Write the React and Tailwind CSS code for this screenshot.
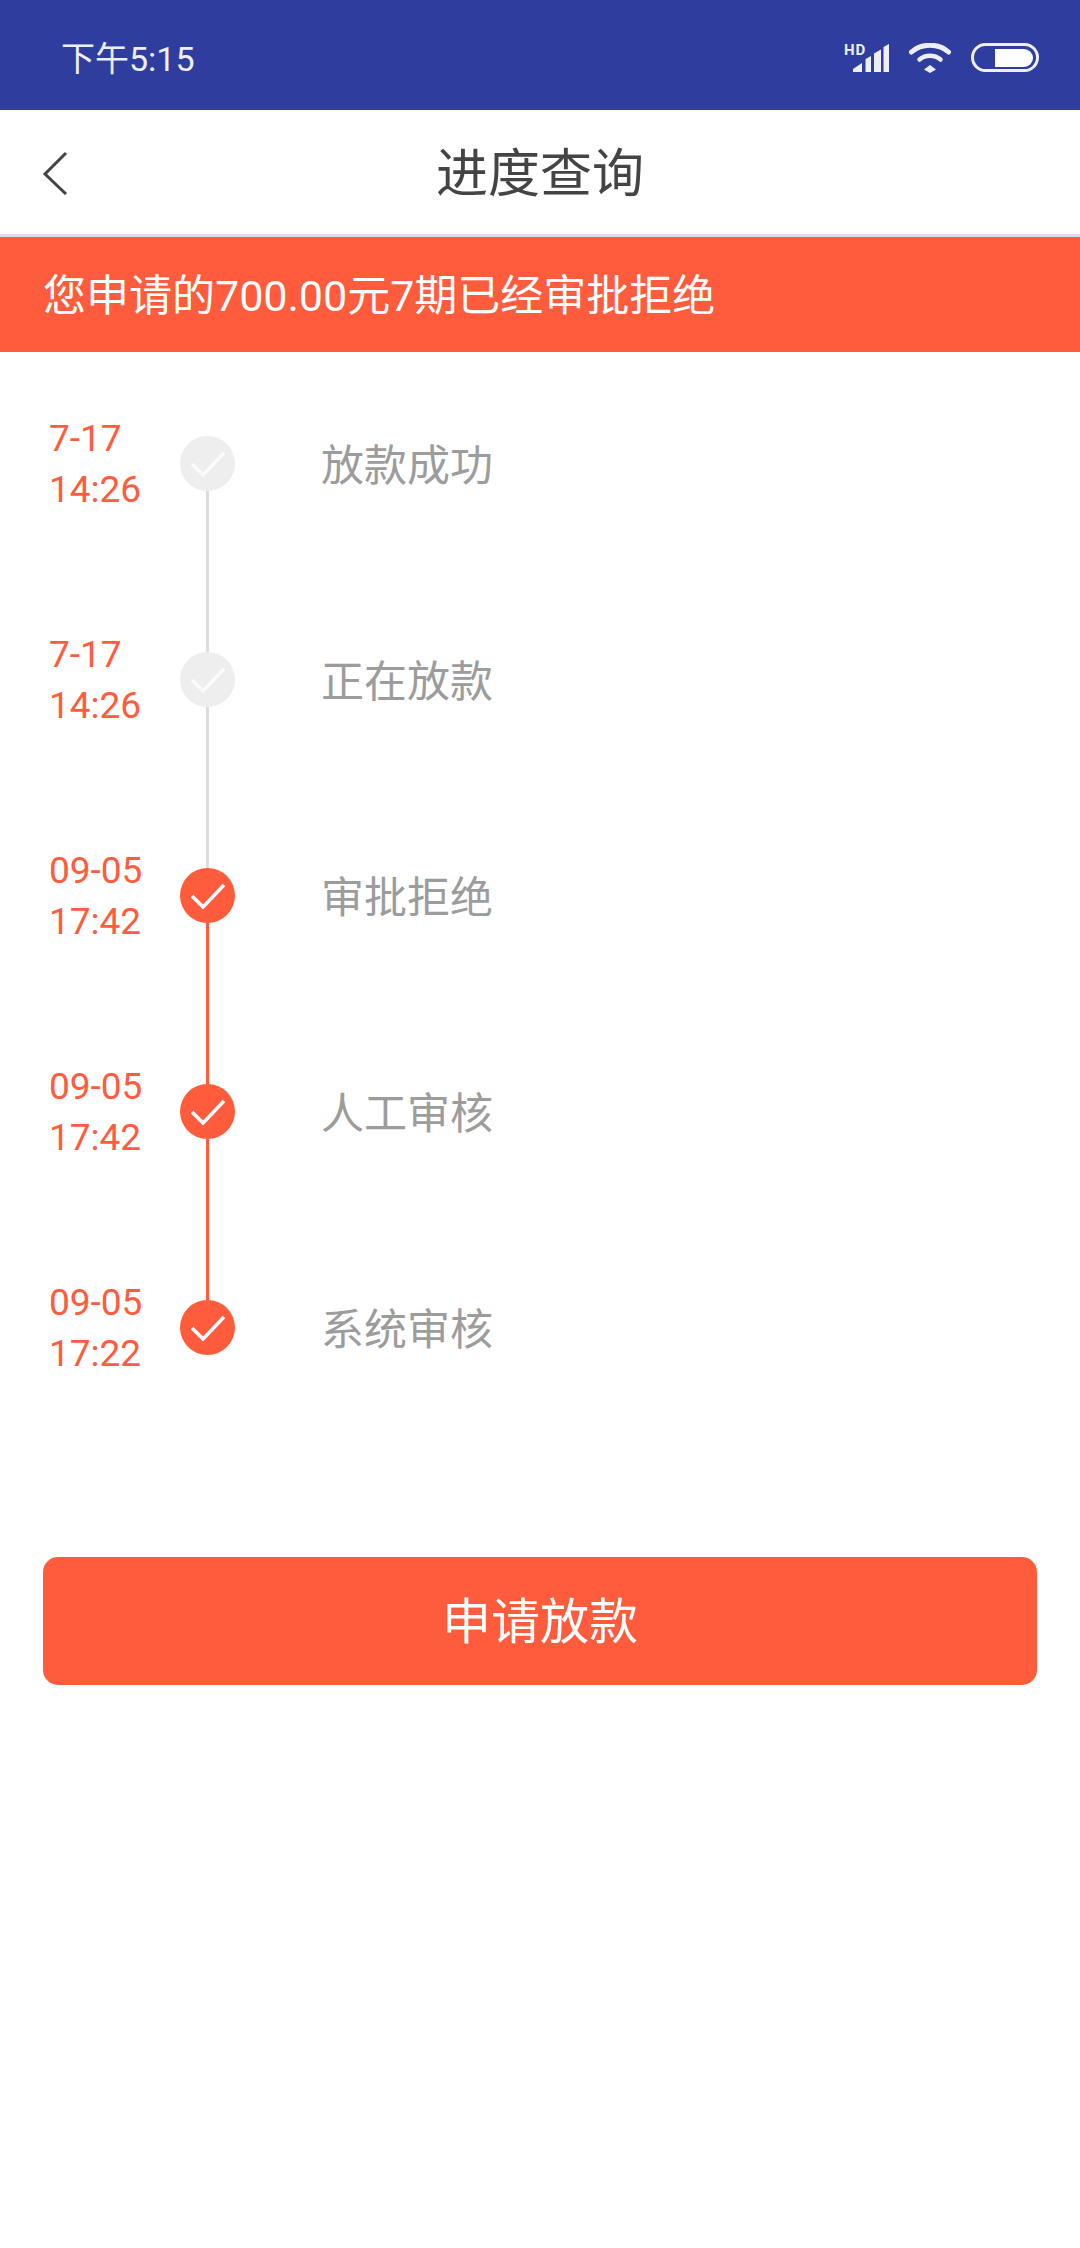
import React from "react";

const steps = [
  { date: "7-17", time: "14:26", label: "放款成功", done: false },
  { date: "7-17", time: "14:26", label: "正在放款", done: false },
  { date: "09-05", time: "17:42", label: "审批拒绝", done: true },
  { date: "09-05", time: "17:42", label: "人工审核", done: true },
  { date: "09-05", time: "17:22", label: "系统审核", done: true, last: true },
];

const font = "font-['Roboto','Noto_Sans_CJK_SC',sans-serif]";

const StatusIcons = () => (
  <div className="mt-[5px] flex items-center gap-[20px]">
    <svg className="overflow-visible" width="45" height="28" viewBox="0 0 45 28" fill="#eeeef8">
      <text x="0" y="10.500" fontSize="15" fontWeight="700" fontFamily="Roboto, sans-serif" letterSpacing="0.8">HD</text>
      <path d="M9 28v-3l9-6v9zM21.500 28V15l5.500-3v16zM30 28V9.500l7-4V28zM39.500 28V3l5.500-3v28z" />
    </svg>
    <svg width="42" height="30" viewBox="0 0 42 30" fill="none" stroke="#eeeef8" strokeLinecap="round">
      <path d="M2.500 9C12.500 0 29.500 0 39.500 9" strokeWidth="5" />
      <path d="M10.500 16.500c6-5 15-5 21 0" strokeWidth="4.500" />
      <path fill="#eeeef8" stroke="none" d="M21 22l6 4.500-6 3.500-6-3.500z" />
    </svg>
    <div className="flex h-[29px] w-[68px] items-center justify-end rounded-full border-[3px] border-[#eeeef8] pr-[3px]">
      <div className="h-[18px] w-[38px] rounded-l-[2px] rounded-r-full bg-white" />
    </div>
  </div>
);

const Check = ({ done }) => (
  <div
    className={`flex h-[55px] w-[55px] shrink-0 items-center justify-center rounded-full ${
      done ? "bg-[#ff5c3e]" : "bg-[#eeeeee]"
    }`}
  >
    <svg width="36" height="28" viewBox="0 0 36 28" fill="none" stroke={done ? "#ffffff" : "#fbfbfb"} strokeWidth="3.500">
      <path d="M2 14l11 11L34 3" />
    </svg>
  </div>
);

export default function App() {
  return (
    <div className={`flex min-h-[2248px] w-[1080px] flex-col bg-white ${font}`}>
      <div className="flex h-[110px] items-center justify-between bg-[#2f3e9e] pl-[61px] pr-[41px]">
        <span className="mt-[8px] text-[34px] text-[#eeeef8]">下午5:15</span>
        <StatusIcons />
      </div>

      <div className="relative flex h-[124px] items-center justify-center">
        <svg className="absolute left-[42px] top-[41px]" width="26" height="44" viewBox="0 0 26 44" fill="none" stroke="#444444" strokeWidth="3">
          <path d="M24 2L3 23l21 20" />
        </svg>
        <h1 className="pt-[5px] text-[52px] font-normal text-[#444444]">进度查询</h1>
      </div>
      <div className="h-[3px] bg-[#dddddd]" />

      <div className="flex h-[115px] items-center bg-[#ff5c3e] px-[43px] pt-[4px] text-[43px] text-white">
        您申请的700.00元7期已经审批拒绝
      </div>

      <div className="mt-[84px] flex flex-col">
        {steps.map((s, i) => (
          <div key={i} className="flex h-[216px] items-start">
            <div className="-mt-[23px] w-[180px] pl-[49px] text-[37px] leading-[51px] text-[#ff5c3e]">
              <p>{s.date}</p>
              <p>{s.time}</p>
            </div>
            <div className="flex h-full w-[55px] flex-col items-center">
              <Check done={s.done} />
              {!s.last && (
                <div className={`w-[3px] flex-1 ${s.done ? "bg-[#ff5c3e]" : "bg-[#dddddd]"}`} />
              )}
            </div>
            <p className="ml-[86px] pt-[1px] text-[43px] leading-[59px] text-[#9c9c9c]">{s.label}</p>
          </div>
        ))}
      </div>

      <button className="mx-[43px] mt-[41px] h-[128px] rounded-[15px] bg-[#ff5c3e] pt-[3px] text-[49px] text-white">
        申请放款
      </button>
    </div>
  );
}
